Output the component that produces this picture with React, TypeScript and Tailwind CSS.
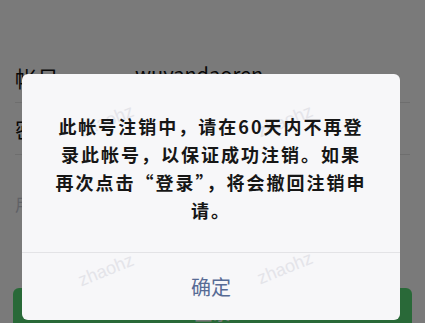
import React from "react";

const cjk = { fontFamily: '"Noto Sans CJK SC", "Noto Sans", sans-serif' };

function Watermark({ className }: { className: string }) {
  return (
    <span
      className={`pointer-events-none absolute -rotate-[22deg] select-none text-[18px] leading-none text-[#e4e4e9] ${className}`}
      style={{ fontFamily: '"Liberation Sans", Arial, sans-serif' }}
    >
      zhaohz
    </span>
  );
}

export default function App() {
  return (
    <div className="relative h-[323px] w-[425px] overflow-hidden bg-white" style={cjk}>
      {/* login page underneath */}
      <div className="flex flex-col">
        <div className="h-[52px] overflow-hidden px-[40px]">
          <p className="-mt-[27px] text-[22px] leading-[24px] text-[#111]">请填写微信号/QQ号/邮箱</p>
        </div>
        <div className="mx-[15px] flex h-[51px] items-center border-b border-[#e5e5e5]">
          <span className="w-[120px] text-[22px] text-[#111]">帐号</span>
          <span className="-mt-[6px] text-[20px] text-[#111]">wuyandaoren</span>
        </div>
        <div className="mx-[15px] flex h-[52px] items-center border-b border-[#e5e5e5]">
          <span className="w-[120px] text-[22px] text-[#111]">密码</span>
          <span className="text-[20px] text-[#b2b2b2]">请填写密码</span>
        </div>
        <p className="mx-[15px] mt-[37px] text-[17px] leading-[24px] text-[#c8cbd6]">用手机号登录</p>
        <div className="mx-[13px] mt-[72px] flex h-[48px] items-center justify-center rounded-[6px] bg-[#57dc75] text-[18px] font-medium text-white">
          登录
        </div>
      </div>

      {/* mask */}
      <div className="absolute inset-0 bg-black/[0.52]" />

      {/* dialog */}
      <div className="absolute left-[22px] top-[74px] flex h-[246px] w-[378px] flex-col overflow-hidden rounded-[6px] bg-[#f7f7f9]">
        <Watermark className="left-[55px] top-[38px]" />
        <Watermark className="left-[234px] top-[38px]" />
        <Watermark className="left-[55px] top-[187px]" />
        <Watermark className="left-[234px] top-[185px]" />
        <p className="relative px-[20px] pb-[28px] pt-[38px] text-center text-[18px] font-semibold leading-[28px] tracking-[2px] text-[#161616]">
          此帐号注销中，请在60天内不再登
          <br />
          录此帐号，以保证成功注销。如果
          <br />
          再次点击“登录”，将会撤回注销申
          <br />
          请。
        </p>
        <div className="relative flex flex-1 items-center justify-center border-t border-[#e3e3e6]">
          <span className="text-[20px] text-[#576b95]">确定</span>
        </div>
      </div>
    </div>
  );
}
